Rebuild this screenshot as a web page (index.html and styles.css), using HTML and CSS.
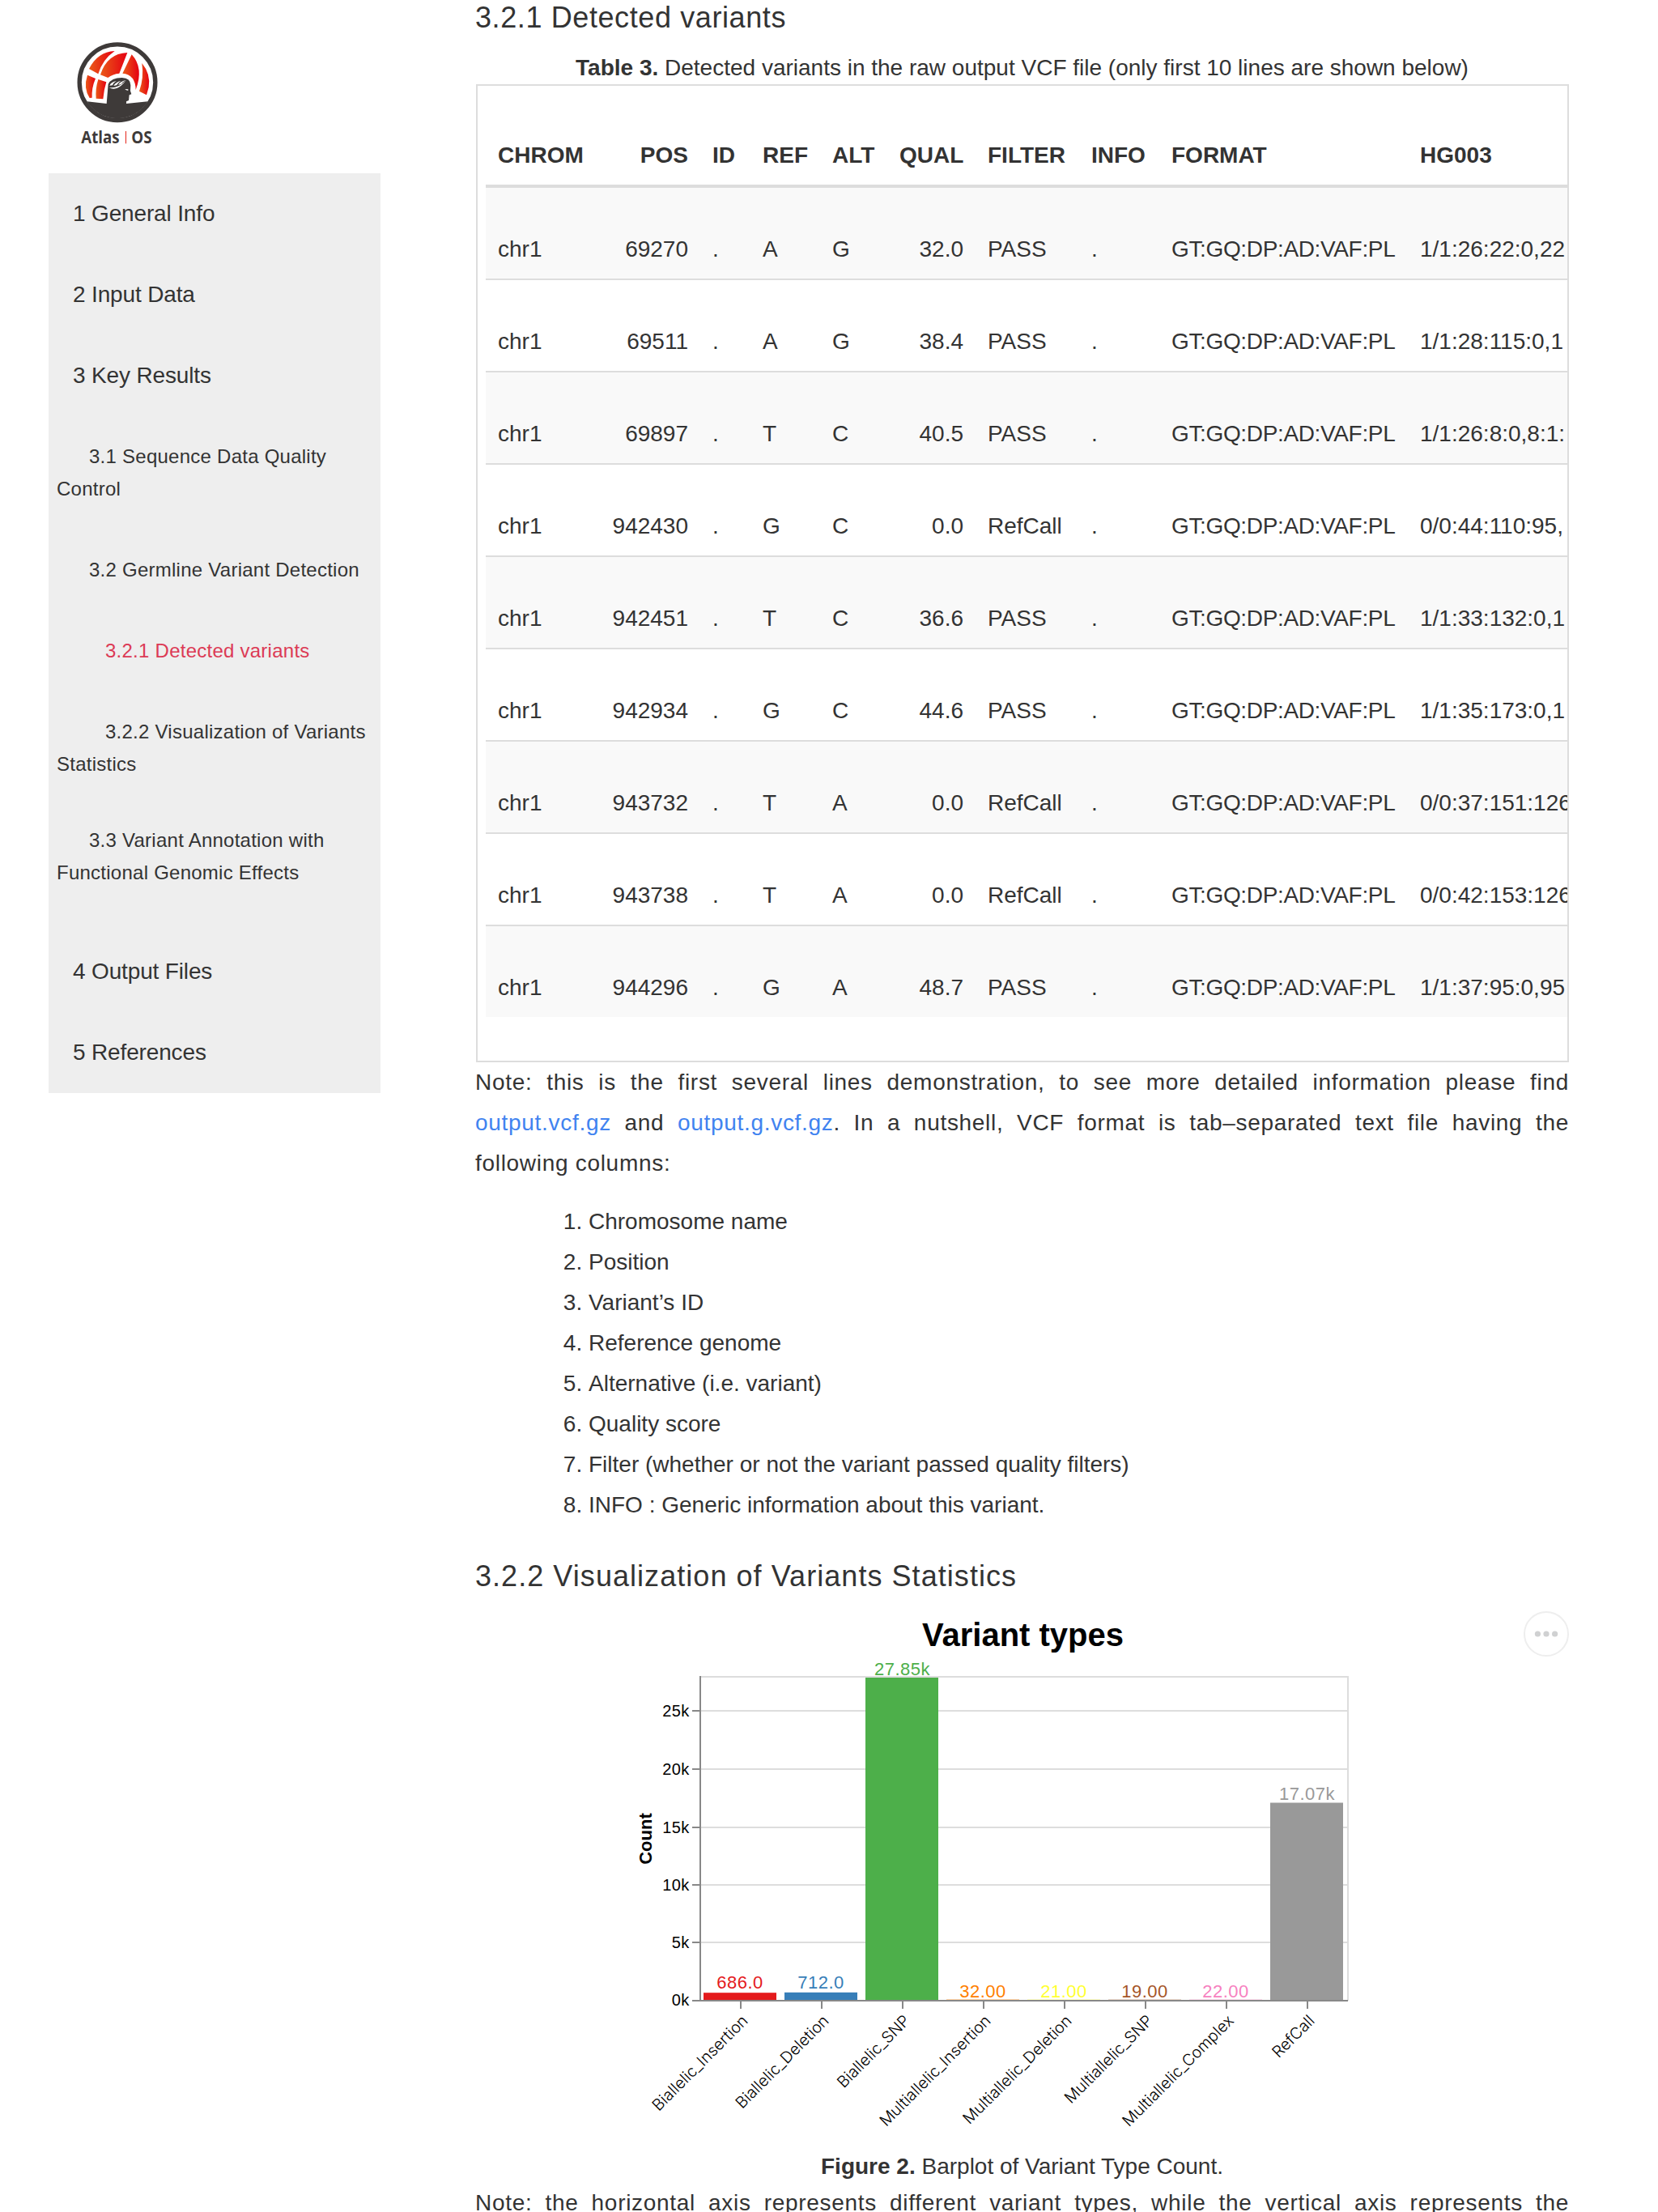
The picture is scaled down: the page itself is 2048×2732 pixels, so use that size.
FILE: index.html
```html
<!DOCTYPE html>
<html lang="en">
<head>
<meta charset="utf-8">
<title>Report</title>
<link rel="stylesheet" href="styles.css">
</head>
<body>
<div class="page">
<aside class="sidebar">
<svg class="logo" viewBox="120 45 330 420">
<defs><linearGradient id="g"><stop offset="0" stop-color="#ea5a18"/><stop offset="1" stop-color="#e50012"/></linearGradient></defs>
<circle cx="285" cy="215" r="140.500" fill="#fff" stroke="#3e3a39" stroke-width="16"/>
<g fill="url(#g)">
<path d="M180 165Q212 102 275 99Q230 130 214 184Z"/>
<path d="M222 187Q247 108 322 105L292 182Q268 184 250 198Z"/>
<path d="M338 112Q384 162 353 243Q352 186 304 182Z"/>
<path d="M376 144Q409 184 401 233L393 262L366 248Q384 200 376 144Z"/>
<path d="M174 188L204 201Q189 235 191 272L182 273Q158 236 174 188Z"/>
<path d="M214 204L244 214Q235 242 232 277L206 275Q203 238 214 204Z"/>
</g>
<path fill="#3e3a39" d="M172 286L245 294L251 222Q262 198 302 198Q334 199 334 226L333 247L337 259L329 262L327 282L318 286V294L398 286A133 133 0 0 1 172 286Z"/>
<g fill="#fff"><path d="M254 234Q284 240 316 209Q300 230 282 237Q266 242 254 234Z"/><path d="M256 227Q262 213 282 211Q270 216 267 226Z"/><path d="M271 228Q279 214 298 210Q286 217 282 226Z"/><path d="M288 224Q298 210 318 207Q304 213 300 222Z"/><path d="M313 240L325 241V245Q318 246 313 240Z"/></g>
<g class="logo-text"><text x="151" y="441" textLength="142" lengthAdjust="spacingAndGlyphs">Atlas</text><text x="337" y="441" textLength="76" lengthAdjust="spacingAndGlyphs">OS</text></g>
<path d="M316.500 396V442" stroke="#e5251b" stroke-width="3"/>
</svg>
<nav class="toc">
<a class="l1">1 General Info</a>
<a class="l1">2 Input Data</a>
<a class="l1">3 Key Results</a>
<a class="l2">3.1 Sequence Data Quality<br>Control</a>
<a class="l2">3.2 Germline Variant Detection</a>
<a class="l3 active">3.2.1 Detected variants</a>
<a class="l3">3.2.2 Visualization of Variants<br>Statistics</a>
<a class="l2 last">3.3 Variant Annotation with<br>Functional Genomic Effects</a>
<a class="l1">4 Output Files</a>
<a class="l1">5 References</a>
</nav>
</aside>
<main class="main">
<h3 class="h-first">3.2.1 Detected variants</h3>
<p class="caption"><b>Table 3.</b> Detected variants in the raw output VCF file (only first 10 lines are shown below)</p>
<div class="box">
<table class="vcf">
<colgroup><col class="c1"><col class="c2"><col class="c3"><col class="c4"><col class="c5"><col class="c6"><col class="c7"><col class="c8"><col class="c9"><col class="c10"></colgroup>
<thead><tr><th>CHROM</th><th class="r">POS</th><th>ID</th><th>REF</th><th>ALT</th><th class="r">QUAL</th><th>FILTER</th><th>INFO</th><th>FORMAT</th><th>HG003</th></tr></thead>
<tbody>
<tr><td>chr1</td><td class="r">69270</td><td>.</td><td>A</td><td>G</td><td class="r">32.0</td><td>PASS</td><td>.</td><td class="f">GT:GQ:DP:AD:VAF:PL</td><td>1/1:26:22:0,22</td></tr>
<tr><td>chr1</td><td class="r">69511</td><td>.</td><td>A</td><td>G</td><td class="r">38.4</td><td>PASS</td><td>.</td><td class="f">GT:GQ:DP:AD:VAF:PL</td><td>1/1:28:115:0,1</td></tr>
<tr><td>chr1</td><td class="r">69897</td><td>.</td><td>T</td><td>C</td><td class="r">40.5</td><td>PASS</td><td>.</td><td class="f">GT:GQ:DP:AD:VAF:PL</td><td>1/1:26:8:0,8:1:</td></tr>
<tr><td>chr1</td><td class="r">942430</td><td>.</td><td>G</td><td>C</td><td class="r">0.0</td><td>RefCall</td><td>.</td><td class="f">GT:GQ:DP:AD:VAF:PL</td><td>0/0:44:110:95,</td></tr>
<tr><td>chr1</td><td class="r">942451</td><td>.</td><td>T</td><td>C</td><td class="r">36.6</td><td>PASS</td><td>.</td><td class="f">GT:GQ:DP:AD:VAF:PL</td><td>1/1:33:132:0,1</td></tr>
<tr><td>chr1</td><td class="r">942934</td><td>.</td><td>G</td><td>C</td><td class="r">44.6</td><td>PASS</td><td>.</td><td class="f">GT:GQ:DP:AD:VAF:PL</td><td>1/1:35:173:0,1</td></tr>
<tr><td>chr1</td><td class="r">943732</td><td>.</td><td>T</td><td>A</td><td class="r">0.0</td><td>RefCall</td><td>.</td><td class="f">GT:GQ:DP:AD:VAF:PL</td><td>0/0:37:151:126</td></tr>
<tr><td>chr1</td><td class="r">943738</td><td>.</td><td>T</td><td>A</td><td class="r">0.0</td><td>RefCall</td><td>.</td><td class="f">GT:GQ:DP:AD:VAF:PL</td><td>0/0:42:153:126</td></tr>
<tr><td>chr1</td><td class="r">944296</td><td>.</td><td>G</td><td>A</td><td class="r">48.7</td><td>PASS</td><td>.</td><td class="f">GT:GQ:DP:AD:VAF:PL</td><td>1/1:37:95:0,95</td></tr>
</tbody>
</table>
</div>
<p class="note"><span class="line">Note: this is the first several lines demonstration, to see more detailed information please find</span> <span class="line"><a>output.vcf.gz</a> and <a>output.g.vcf.gz</a>. In a nutshell, VCF format is tab–separated text file having the</span> following columns:</p>
<ol class="fields">
<li>Chromosome name</li>
<li>Position</li>
<li>Variant’s ID</li>
<li>Reference genome</li>
<li>Alternative (i.e. variant)</li>
<li>Quality score</li>
<li>Filter (whether or not the variant passed quality filters)</li>
<li>INFO : Generic information about this variant.</li>
</ol>
<h3 class="h-second">3.2.2 Visualization of Variants Statistics</h3>
<svg class="chart" viewBox="587 1969 1351 687">
<text class="title" x="1263.500" y="2033">Variant types</text>
<g class="grid"><path d="M865 2071H1665V2471"/><path d="M865 2399H1665M865 2328H1665M865 2257H1665M865 2185H1665M865 2113H1665"/></g>
<rect x="869" y="2461.200" width="90" height="9.800" fill="#e41a1c"/>
<rect x="969" y="2460.800" width="90" height="10.200" fill="#377eb8"/>
<rect x="1069" y="2072" width="90" height="399" fill="#4daf4a"/>
<rect x="1169" y="2469.300" width="90" height="1" fill="#ff7f00" opacity=".5"/>
<rect x="1269" y="2469.300" width="90" height="1" fill="#ffff33" opacity=".4"/>
<rect x="1369" y="2469.300" width="90" height="1" fill="#a65628" opacity=".35"/>
<rect x="1469" y="2469.300" width="90" height="1" fill="#f781bf" opacity=".4"/>
<rect x="1569" y="2226.500" width="90" height="244.500" fill="#999"/>
<path class="axis" d="M865 2070V2472M855 2471H1665M855 2399H865M855 2328H865M855 2257H865M855 2185H865M855 2113H865M915 2471V2481M1015 2471V2481M1115 2471V2481M1215 2471V2481M1315 2471V2481M1415 2471V2481M1515 2471V2481M1615 2471V2481"/>
<g class="ylab"><text x="851.500" y="2120">25k</text><text x="851.500" y="2191.500">20k</text><text x="851.500" y="2263.500">15k</text><text x="851.500" y="2334.500">10k</text><text x="851.500" y="2406">5k</text><text x="851.500" y="2477">0k</text></g>
<g class="val"><text x="914" y="2456" fill="#e41a1c">686.0</text><text x="1014" y="2456" fill="#377eb8">712.0</text><text x="1114.500" y="2069" fill="#4daf4a">27.85k</text><text x="1214" y="2466.500" fill="#ff7f00">32.00</text><text x="1314" y="2466.500" fill="#ffff33">21.00</text><text x="1414" y="2466.500" fill="#a65628">19.00</text><text x="1514" y="2466.500" fill="#f781bf">22.00</text><text x="1614.500" y="2222.500" fill="#999">17.07k</text></g>
<text class="ytitle" transform="translate(804.500 2271) rotate(-90)">Count</text>
<g class="xlab">
<text transform="translate(925 2497) rotate(-45)">Biallelic_Insertion</text>
<text transform="translate(1025 2497) rotate(-45)">Biallelic_Deletion</text>
<text transform="translate(1125 2497) rotate(-45)">Biallelic_SNP</text>
<text transform="translate(1225 2497) rotate(-45)">Multiallelic_Insertion</text>
<text transform="translate(1325 2497) rotate(-45)">Multiallelic_Deletion</text>
<text transform="translate(1425 2497) rotate(-45)">Multiallelic_SNP</text>
<text transform="translate(1525 2497) rotate(-45)">Multiallelic_Complex</text>
<text transform="translate(1625 2497) rotate(-45)">RefCall</text>
</g>
<circle cx="1910" cy="2018" r="27" fill="#fff" stroke="#eee" stroke-width="2"/>
<g fill="#d0d1d2"><circle cx="1899.400" cy="2018" r="3.600"/><circle cx="1910" cy="2018" r="3.600"/><circle cx="1920.600" cy="2018" r="3.600"/></g>
</svg>
<p class="caption"><b>Figure 2.</b> Barplot of Variant Type Count.</p>
<p class="note"><span class="line">Note: the horizontal axis represents different variant types, while the vertical axis represents the</span></p>
</main>
</div>
</body>
</html>
```
FILE: styles.css
```css
html, body { margin: 0; background: #fff; }
body { font-family: "Liberation Sans", Arial, sans-serif; font-size: 28px; color: #333; }
.page { display: flex; align-items: flex-start; height: 2732px; overflow: hidden; }
.sidebar { width: 410px; margin-left: 60px; padding-top: 45px; flex: none; }
.logo { display: block; width: 110px; height: 140px; margin: 0 0 29px 30px; }
.logo-text { font: 700 62px "Open Sans", sans-serif; fill: #3e3a39; }
.toc { background: #eee; }
.toc a { display: block; padding: 30px 0 30px 10px; line-height: 40px; white-space: nowrap; }
.toc .l1 { text-indent: 20px; letter-spacing: -0.15px; }
.toc .l2, .toc .l3 { font-size: 24px; letter-spacing: 0.25px; }
.toc .l2 { text-indent: 40px; }
.toc .l3 { text-indent: 60px; }
.toc .active { color: #dc3a55; }
.toc .last { margin: -6px 0 22px; }
.main { width: 1351px; margin-left: 117px; flex: none; }
h3 { margin: 0; font-weight: 400; font-size: 36px; line-height: 44px; }
.h-first { padding-bottom: 20px; letter-spacing: 0.6px; }
.h-second { margin-top: 41px; letter-spacing: 1.05px; }
.caption { margin: 0; text-align: center; line-height: 40px; }
.box { box-sizing: border-box; height: 1208px; margin-left: 1px; padding-left: 10px; border: 2px solid #ddd; overflow: hidden; }
.vcf { width: 1800px; table-layout: fixed; border-collapse: separate; border-spacing: 0; }
.c1 { width: 140px; } .c2 { width: 125px; } .c3 { width: 62px; } .c4 { width: 86px; } .c5 { width: 83px; }
.c6 { width: 109px; } .c7 { width: 128px; } .c8 { width: 99px; } .c9 { width: 307px; } .c10 { width: 661px; }
.vcf th, .vcf td { box-sizing: border-box; padding: 0 15px 16px; line-height: 40px; text-align: left; vertical-align: bottom; white-space: nowrap; }
.vcf th { height: 126px; border-bottom: 4px solid #ddd; }
.vcf td { height: 114px; border-bottom: 2px solid #ddd; }
.vcf tr:last-child td { height: 112px; border-bottom: 0; }
.vcf thead tr:last-child th { border-bottom: 4px solid #ddd; }
.vcf tbody tr:nth-child(odd) td { background: #f9f9f9; }
.vcf .r { text-align: right; }
.vcf .f { letter-spacing: -0.35px; }
.note { margin: 0; line-height: 50px; letter-spacing: 0.7px; }
.line { display: block; white-space: nowrap; text-align: justify; text-align-last: justify; }
.note .line { white-space: normal; }
.note a { color: #4183f0; }
.fields { margin: 22px 0 0; padding-left: 140px; line-height: 50px; }
.chart { display: block; width: 1351px; height: 687px; }
.title { font-size: 40px; font-weight: 700; text-anchor: middle; fill: #000; }
.grid { fill: none; stroke: #ddd; stroke-width: 2; }
.axis { fill: none; stroke: #888; stroke-width: 2; }
.ylab { font-size: 20px; text-anchor: end; fill: #000; letter-spacing: 0.3px; }
.val { font-size: 22px; text-anchor: middle; letter-spacing: 0.5px; }
.ytitle { font-size: 22px; font-weight: 700; text-anchor: middle; fill: #000; }
.xlab { font-family: Inter, sans-serif; font-weight: 300; font-size: 19.6px; text-anchor: end; fill: #000; }
```
